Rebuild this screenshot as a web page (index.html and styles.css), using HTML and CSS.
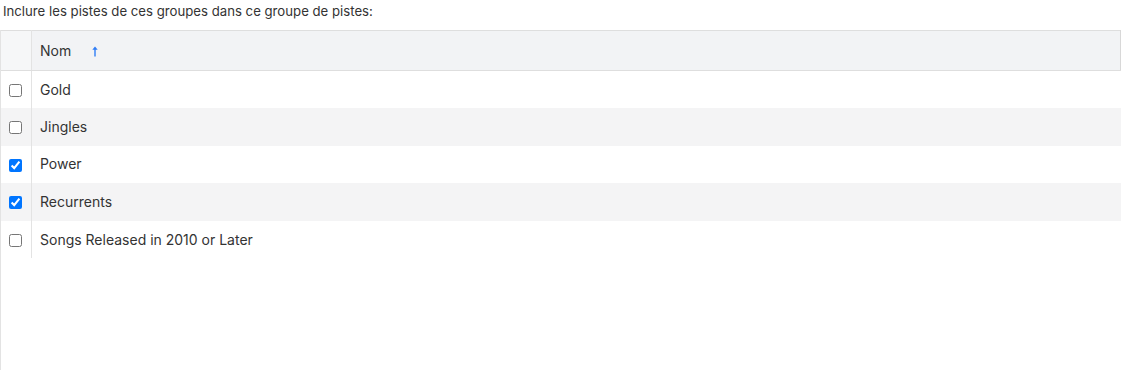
FILE: index.html
```html
<!DOCTYPE html>
<html lang="fr">
<head>
  <meta charset="UTF-8" />
  <title>Groupes de pistes</title>
  <link rel="stylesheet" href="styles.css">
</head>
<body>
  <p class="intro">Inclure les pistes de ces groupes dans ce groupe de pistes:</p>
  <div class="grid">
    <table>
      <thead>
        <tr>
          <th class="check-col"></th>
          <th class="name-col">
            <span>Nom</span>
            <svg class="sort" width="6" height="11" viewBox="0 0 6 11">
              <path d="M3 2 L3 10.5" stroke="#2f7df6" stroke-width="1.4" />
              <path d="M0.3 3.8 L3 0.6 L5.7 3.8 Z" fill="#2f7df6" />
            </svg>
          </th>
        </tr>
      </thead>
      <tbody>
        <tr><td class="check-col"><input type="checkbox"></td><td>Gold</td></tr>
        <tr><td class="check-col"><input type="checkbox"></td><td>Jingles</td></tr>
        <tr><td class="check-col"><input type="checkbox" checked></td><td>Power</td></tr>
        <tr><td class="check-col"><input type="checkbox" checked></td><td>Recurrents</td></tr>
        <tr><td class="check-col"><input type="checkbox"></td><td>Songs Released in 2010 or Later</td></tr>
      </tbody>
    </table>
  </div>
</body>
</html>
```

FILE: styles.css
```css
html, body {
  height: 100%;
}
body {
  margin: 0;
  font-family: Inter, "Noto Sans", sans-serif;
  font-size: 14px;
  color: #333;
  display: flex;
  flex-direction: column;
}
.intro {
  margin: 0;
  padding: 3px 0 0 3px;
  height: 30px;
  box-sizing: border-box;
  line-height: 16px;
  font-size: 13.2px;
}
.grid {
  flex: 1;
  border-left: 1px solid #e3e3e3;
}
table {
  width: 100%;
  border-collapse: collapse;
}
thead tr {
  background: #f2f3f5;
  height: 40px;
}
th {
  border-top: 1px solid #dedede;
  border-bottom: 1px solid #dedede;
  font-weight: normal;
  text-align: left;
  padding: 0;
}
th.check-col {
  background: #f6f7f8;
}
th.name-col {
  padding-left: 8px;
  border-right: 1px solid #d8d8d8;
}
th.name-col span {
  margin-right: 17px;
}
.sort {
  vertical-align: -1px;
}
.check-col {
  width: 30px;
  border-right: 1px solid #e3e3e3;
  text-align: center;
  padding: 0;
}
tbody tr {
  height: 37.6px;
}
tbody tr:nth-child(even) {
  background: #f4f4f5;
}
td {
  padding: 0 0 1px 8px;
}
td.check-col {
  padding: 0;
}
input[type="checkbox"] {
  margin: 0;
  width: 13px;
  height: 13px;
  vertical-align: middle;
  position: relative;
  top: -1px;
  left: -1px;
}
```
